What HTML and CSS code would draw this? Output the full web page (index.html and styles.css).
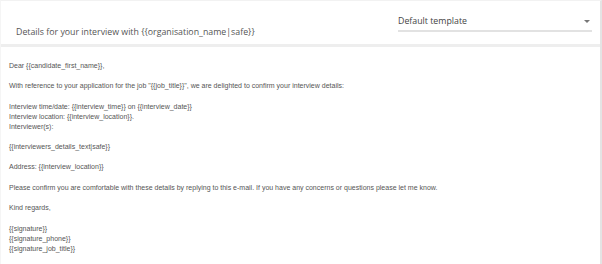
FILE: index.html
```html
<!DOCTYPE html>
<html lang="en">
<head>
    <meta charset="UTF-8">
    <meta name="viewport" content="width=device-width, initial-scale=1.0">
    <title>Interview details template</title>
    <link rel="stylesheet" href="styles.css">
</head>
<body>
    <div class="panel">
        <div class="header">
            <div class="subject">Details for your interview with {{organisation_name|safe}}</div>
            <div class="template-select">
                <span>Default template</span>
                <span class="arrow"></span>
            </div>
        </div>
        <div class="divider"></div>
        <div class="email-body">
            <p>Dear {{candidate_first_name}},</p>
            <p>With reference to your application for the job "{{job_title}}", we are delighted to confirm your interview details:</p>
            <p>Interview time/date: {{interview_time}} on {{interview_date}}<br>
               Interview location: {{interview_location}}.<br>
               Interviewer(s):</p>
            <p>{{interviewers_details_text|safe}}</p>
            <p>Address: {{interview_location}}</p>
            <p>Please confirm you are comfortable with these details by replying to this e-mail. If you have any concerns or questions please let me know.</p>
            <p>Kind regards,</p>
            <p>{{signature}}<br>
               {{signature_phone}}<br>
               {{signature_job_title}}</p>
        </div>
    </div>
</body>
</html>
```

FILE: styles.css
```css
body {
    margin: 0;
    padding: 0;
    background-color: white;
    font-family: "Open Sans", sans-serif;
}
.panel {
    width: 602px;
    height: 264px;
    box-sizing: border-box;
    border-top: 1px solid #f2f2f2;
    border-left: 1px solid #f5f5f5;
    border-right: 2px solid #e4e4e4;
    display: flex;
    flex-direction: column;
}
.header {
    height: 47px;
    display: flex;
    justify-content: space-between;
    align-items: flex-start;
}
.subject {
    padding-top: 25px;
    padding-left: 15px;
    font-size: 8.8px;
    line-height: 12px;
    color: #555;
}
.template-select {
    width: 194px;
    margin-top: 14px;
    margin-right: 8px;
    padding-bottom: 3px;
    border-bottom: 2px solid #e2e2e2;
    display: flex;
    justify-content: space-between;
    align-items: center;
    font-size: 8.8px;
    line-height: 12px;
    color: #444;
}
.arrow {
    width: 0;
    height: 0;
    margin-right: 2px;
    border-left: 3px solid transparent;
    border-right: 3px solid transparent;
    border-top: 3px solid #777;
}
.divider {
    height: 3px;
    background-color: #eeeeee;
}
.email-body {
    padding: 14px 8px 0;
    font-family: "Liberation Sans", Arial, sans-serif;
    font-size: 7px;
    line-height: 10px;
    color: #555;
}
.email-body p {
    margin: 0 0 10.4px;
}
```
